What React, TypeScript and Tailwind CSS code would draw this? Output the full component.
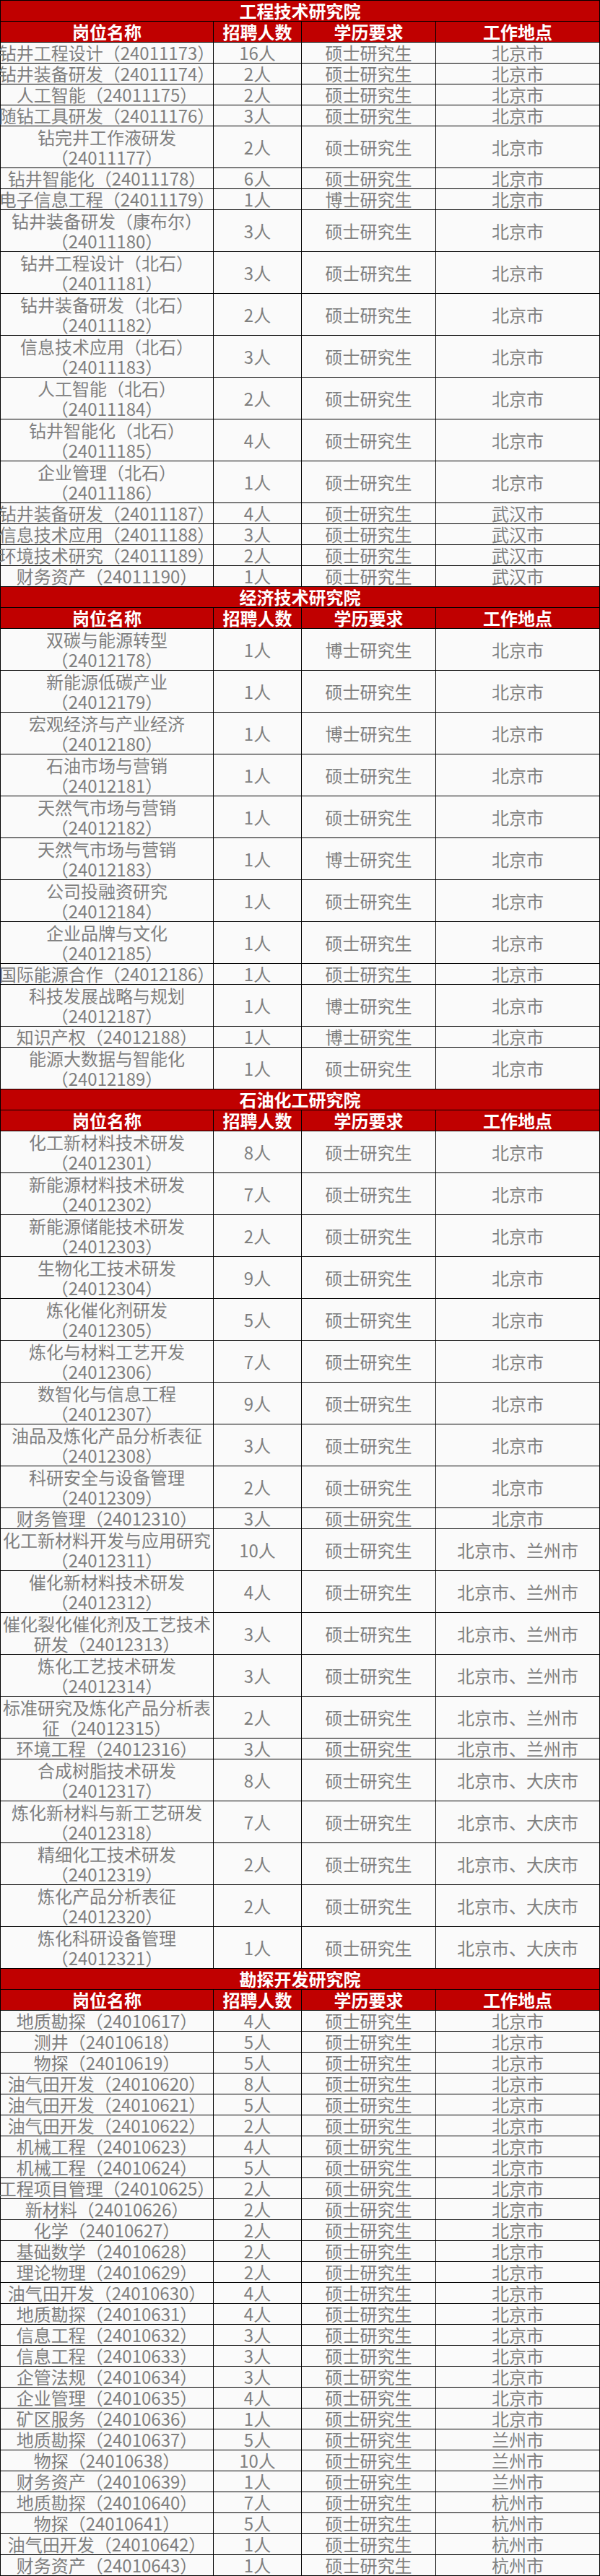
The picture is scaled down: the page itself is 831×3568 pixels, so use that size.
import React from "react";

type Row = [string[], string, string, string];

const BJ = "北京市";
const SS = "硕士研究生";
const BS = "博士研究生";

const sections: { title: string; rows: Row[] }[] = [
  {
    title: "工程技术研究院",
    rows: [
      [["钻井工程设计（24011173）"], "16人", SS, BJ],
      [["钻井装备研发（24011174）"], "2人", SS, BJ],
      [["人工智能（24011175）"], "2人", SS, BJ],
      [["随钻工具研发（24011176）"], "3人", SS, BJ],
      [["钻完井工作液研发", "（24011177）"], "2人", SS, BJ],
      [["钻井智能化（24011178）"], "6人", SS, BJ],
      [["电子信息工程（24011179）"], "1人", BS, BJ],
      [["钻井装备研发（康布尔）", "（24011180）"], "3人", SS, BJ],
      [["钻井工程设计（北石）", "（24011181）"], "3人", SS, BJ],
      [["钻井装备研发（北石）", "（24011182）"], "2人", SS, BJ],
      [["信息技术应用（北石）", "（24011183）"], "3人", SS, BJ],
      [["人工智能（北石）", "（24011184）"], "2人", SS, BJ],
      [["钻井智能化（北石）", "（24011185）"], "4人", SS, BJ],
      [["企业管理（北石）", "（24011186）"], "1人", SS, BJ],
      [["钻井装备研发（24011187）"], "4人", SS, "武汉市"],
      [["信息技术应用（24011188）"], "3人", SS, "武汉市"],
      [["环境技术研究（24011189）"], "2人", SS, "武汉市"],
      [["财务资产（24011190）"], "1人", SS, "武汉市"],
    ],
  },
  {
    title: "经济技术研究院",
    rows: [
      [["双碳与能源转型", "（24012178）"], "1人", BS, BJ],
      [["新能源低碳产业", "（24012179）"], "1人", SS, BJ],
      [["宏观经济与产业经济", "（24012180）"], "1人", BS, BJ],
      [["石油市场与营销", "（24012181）"], "1人", SS, BJ],
      [["天然气市场与营销", "（24012182）"], "1人", SS, BJ],
      [["天然气市场与营销", "（24012183）"], "1人", BS, BJ],
      [["公司投融资研究", "（24012184）"], "1人", SS, BJ],
      [["企业品牌与文化", "（24012185）"], "1人", SS, BJ],
      [["国际能源合作（24012186）"], "1人", SS, BJ],
      [["科技发展战略与规划", "（24012187）"], "1人", BS, BJ],
      [["知识产权（24012188）"], "1人", BS, BJ],
      [["能源大数据与智能化", "（24012189）"], "1人", SS, BJ],
    ],
  },
  {
    title: "石油化工研究院",
    rows: [
      [["化工新材料技术研发", "（24012301）"], "8人", SS, BJ],
      [["新能源材料技术研发", "（24012302）"], "7人", SS, BJ],
      [["新能源储能技术研发", "（24012303）"], "2人", SS, BJ],
      [["生物化工技术研发", "（24012304）"], "9人", SS, BJ],
      [["炼化催化剂研发", "（24012305）"], "5人", SS, BJ],
      [["炼化与材料工艺开发", "（24012306）"], "7人", SS, BJ],
      [["数智化与信息工程", "（24012307）"], "9人", SS, BJ],
      [["油品及炼化产品分析表征", "（24012308）"], "3人", SS, BJ],
      [["科研安全与设备管理", "（24012309）"], "2人", SS, BJ],
      [["财务管理（24012310）"], "3人", SS, BJ],
      [["化工新材料开发与应用研究", "（24012311）"], "10人", SS, "北京市、兰州市"],
      [["催化新材料技术研发", "（24012312）"], "4人", SS, "北京市、兰州市"],
      [["催化裂化催化剂及工艺技术", "研发（24012313）"], "3人", SS, "北京市、兰州市"],
      [["炼化工艺技术研发", "（24012314）"], "3人", SS, "北京市、兰州市"],
      [["标准研究及炼化产品分析表", "征（24012315）"], "2人", SS, "北京市、兰州市"],
      [["环境工程（24012316）"], "3人", SS, "北京市、兰州市"],
      [["合成树脂技术研发", "（24012317）"], "8人", SS, "北京市、大庆市"],
      [["炼化新材料与新工艺研发", "（24012318）"], "7人", SS, "北京市、大庆市"],
      [["精细化工技术研发", "（24012319）"], "2人", SS, "北京市、大庆市"],
      [["炼化产品分析表征", "（24012320）"], "2人", SS, "北京市、大庆市"],
      [["炼化科研设备管理", "（24012321）"], "1人", SS, "北京市、大庆市"],
    ],
  },
  {
    title: "勘探开发研究院",
    rows: [
      [["地质勘探（24010617）"], "4人", SS, BJ],
      [["测井（24010618）"], "5人", SS, BJ],
      [["物探（24010619）"], "5人", SS, BJ],
      [["油气田开发（24010620）"], "8人", SS, BJ],
      [["油气田开发（24010621）"], "5人", SS, BJ],
      [["油气田开发（24010622）"], "2人", SS, BJ],
      [["机械工程（24010623）"], "4人", SS, BJ],
      [["机械工程（24010624）"], "5人", SS, BJ],
      [["工程项目管理（24010625）"], "2人", SS, BJ],
      [["新材料（24010626）"], "2人", SS, BJ],
      [["化学（24010627）"], "2人", SS, BJ],
      [["基础数学（24010628）"], "2人", SS, BJ],
      [["理论物理（24010629）"], "2人", SS, BJ],
      [["油气田开发（24010630）"], "4人", SS, BJ],
      [["地质勘探（24010631）"], "4人", SS, BJ],
      [["信息工程（24010632）"], "3人", SS, BJ],
      [["信息工程（24010633）"], "3人", SS, BJ],
      [["企管法规（24010634）"], "3人", SS, BJ],
      [["企业管理（24010635）"], "4人", SS, BJ],
      [["矿区服务（24010636）"], "1人", SS, BJ],
      [["地质勘探（24010637）"], "5人", SS, "兰州市"],
      [["物探（24010638）"], "10人", SS, "兰州市"],
      [["财务资产（24010639）"], "1人", SS, "兰州市"],
      [["地质勘探（24010640）"], "7人", SS, "杭州市"],
      [["物探（24010641）"], "5人", SS, "杭州市"],
      [["油气田开发（24010642）"], "1人", SS, "杭州市"],
      [["财务资产（24010643）"], "1人", SS, "杭州市"],
    ],
  },
];

const cols = "grid grid-cols-[295px_122px_186px_227px]";
const cellBase =
  "flex flex-col items-center justify-center border-r border-b border-black whitespace-nowrap leading-[28px]";

function Section({ title, rows }: { title: string; rows: Row[] }) {
  return (
    <div>
      <div className="h-[29px] flex items-center justify-center bg-[#C00000] border-r border-b border-black text-white font-bold text-[24px] leading-[28px]">
        {title}
      </div>
      <div className={cols}>
        {["岗位名称", "招聘人数", "学历要求", "工作地点"].map((h) => (
          <div
            key={h}
            className="h-[29px] flex items-center justify-center bg-[#C00000] border-r border-b border-black text-white font-bold text-[24px] leading-[28px]"
          >
            {h}
          </div>
        ))}
      </div>
      {rows.map((r, i) => {
        const tall = r[0].length > 1;
        const h = tall ? "h-[58px]" : "h-[29px]";
        return (
          <div key={i} className={cols}>
            <div className={`${cellBase} ${h}`}>
              {r[0].map((l, j) => (
                <span key={j}>{l}</span>
              ))}
            </div>
            <div className={`${cellBase} ${h}`}>{r[1]}</div>
            <div className={`${cellBase} ${h}`}>{r[2]}</div>
            <div className={`${cellBase} ${h}`}>{r[3]}</div>
          </div>
        );
      })}
    </div>
  );
}

export default function App() {
  return (
    <div className="w-[831px] bg-white font-['Noto_Sans_CJK_SC','Noto_Sans',sans-serif]">
      <div className="border-l border-t border-black bg-[#FAFAFA] text-[#7F7F7F] text-[24px]">
        {sections.map((s) => (
          <Section key={s.title} title={s.title} rows={s.rows} />
        ))}
      </div>
    </div>
  );
}
